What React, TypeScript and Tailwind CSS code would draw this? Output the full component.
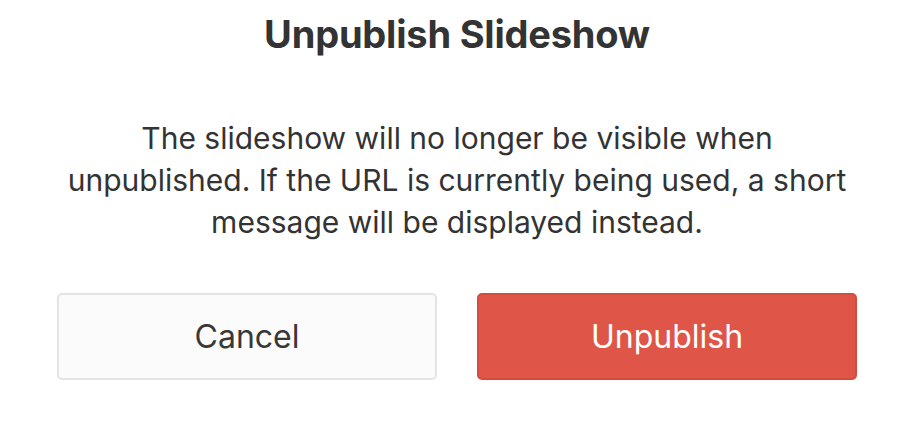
export default function App() {
  return (
    <div
      className="w-[906px] h-[430px] bg-white pl-[57px] pr-[49px] flex flex-col items-center text-[#333333]"
      style={{ fontFamily: "Inter, 'Noto Sans', sans-serif" }}
    >
      <h1 className="mt-[11px] text-[38px] leading-[46px] font-bold tracking-[-0.2px]">
        Unpublish Slideshow
      </h1>
      <p className="mt-[60px] text-[30px] leading-[42px] text-center">
        The slideshow will no longer be visible when
        <br />
        unpublished. If the URL is currently being used, a short
        <br />
        message will be displayed instead.
      </p>
      <div className="mt-[50px] w-full grid grid-cols-2 gap-[40px]">
        <button className="h-[87px] rounded-[5px] border-2 border-[#e4e4e4] bg-[#fbfbfb] text-[32px] text-[#383838]">
          Cancel
        </button>
        <button className="h-[87px] rounded-[5px] border-2 border-[#d24c40] bg-[#df5648] text-[32px] text-white">
          Unpublish
        </button>
      </div>
    </div>
  );
}
